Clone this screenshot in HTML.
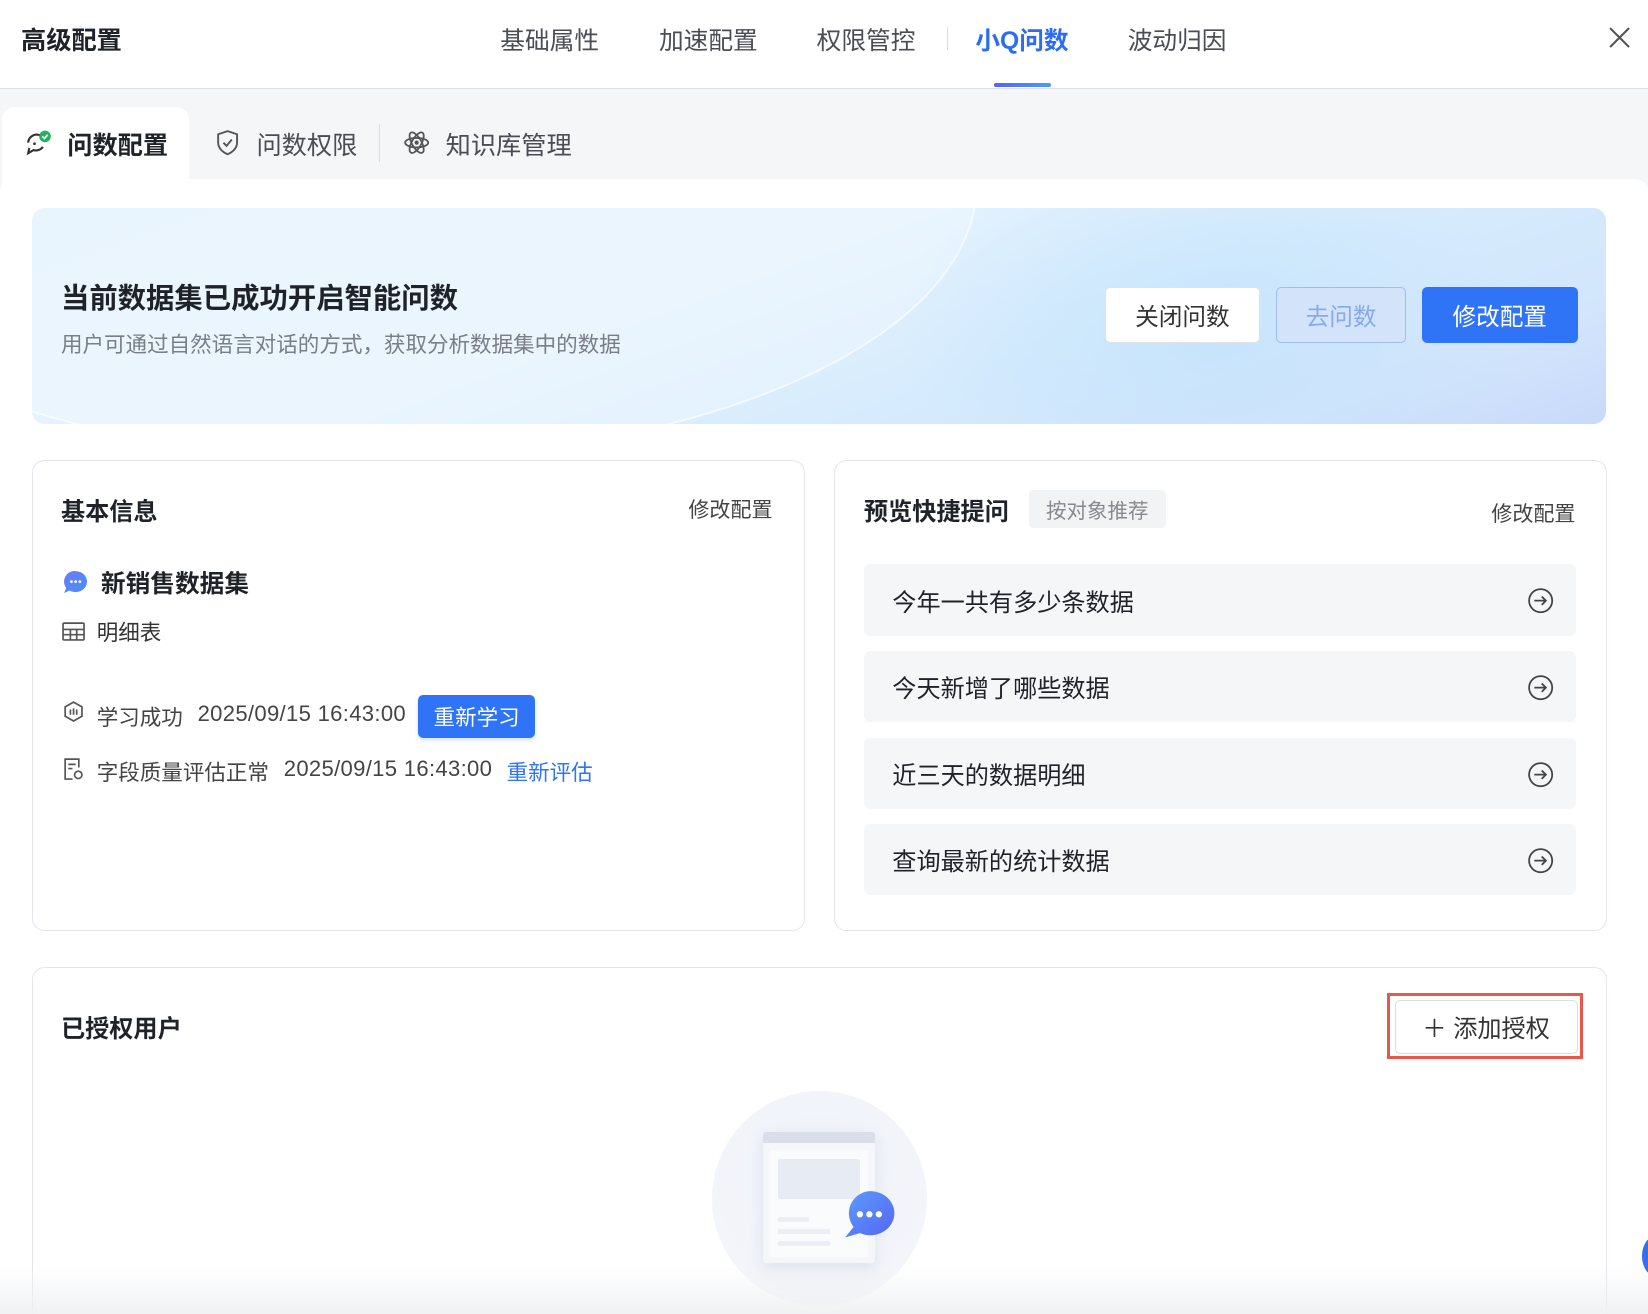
<!DOCTYPE html>
<html><head><meta charset="utf-8"><style>
html{zoom:1.051;overflow:hidden;height:1250px}
*{box-sizing:border-box;margin:0;padding:0}
body{width:1568px;height:1250px;overflow:hidden;background:#fff;font-family:"Liberation Sans","Noto Sans CJK SC",sans-serif;color:#1f2329;position:relative}
.a{position:absolute}
.hdr{left:0;top:0;width:1568px;height:85px;border-bottom:1px solid #e2e3e6;background:#fff}
.t{font-size:23.5px;color:#4a4d55;white-space:nowrap}
.gray{left:0;top:85px;width:1568px;height:1165px;background:#f5f6f8}
.btn{border-radius:5px;font-size:22.5px;display:flex;align-items:center;justify-content:center}
.card{border:1px solid #e3e5ea;border-radius:12px;background:#fff}
.item{left:822px;width:678px;height:68px;background:#f5f6f8;border-radius:6px;font-size:23px;color:#1f2329;padding-left:27px;display:flex;align-items:center}
.item svg{position:absolute;right:21px;top:22px}
.d{font-size:21px;letter-spacing:.3px}
</style></head><body>
<div class="a hdr"></div>
<div class="a" style="left:20px;top:20px;font-size:24px;font-weight:bold;color:#1f2329">高级配置</div>
<div class="a t" style="left:476px;top:20px">基础属性</div>
<div class="a t" style="left:627px;top:20px">加速配置</div>
<div class="a t" style="left:777px;top:20px">权限管控</div>
<div class="a" style="left:901px;top:26px;width:1px;height:22px;background:#dcdde0"></div>
<div class="a t" style="left:928px;top:20px;color:#2b6cf5;font-weight:bold">小Q问数</div>
<div class="a t" style="left:1073px;top:20px">波动归因</div>
<div class="a" style="left:946px;top:79px;width:54px;height:4px;border-radius:2px;background:linear-gradient(90deg,#5b62f5,#4a9bf7)"></div>
<svg class="a" style="left:1530px;top:25px" width="22" height="22" viewBox="0 0 22 22"><path d="M2 2L20 20M20 2L2 20" stroke="#555" stroke-width="2"/></svg>

<div class="a gray"></div>
<div class="a" style="left:2px;top:102px;width:178px;height:80px;background:#fff;border-radius:12px 12px 0 0"></div>
<div class="a" style="left:0;top:170px;width:1568px;height:1080px;background:#fff;border-radius:12px 12px 0 0"></div>
<svg class="a" style="left:23px;top:122px" width="28" height="28" viewBox="0 0 28 28"><path d="M4 14a8 8 0 0 1 14-5M5 19l-1 5 5-3a8 8 0 0 0 9-3" fill="none" stroke="#333" stroke-width="2"/><circle cx="10" cy="15" r="1.3" fill="#333"/><circle cx="20" cy="8" r="5.5" fill="#21b25a"/><path d="M17.5 8l2 2 3-3.5" stroke="#fff" stroke-width="1.6" fill="none"/></svg>
<div class="a" style="left:64px;top:120px;font-size:24px;font-weight:bold">问数配置</div>
<svg class="a" style="left:205px;top:123px" width="24" height="26" viewBox="0 0 24 26"><path d="M12 2l9 3v8c0 5-4 9-9 11-5-2-9-6-9-11V5z" fill="none" stroke="#555" stroke-width="1.8"/><path d="M8 13l3 3 5-6" fill="none" stroke="#555" stroke-width="1.8"/></svg>
<div class="a t" style="left:244px;top:120px;font-size:24px">问数权限</div>
<div class="a" style="left:361px;top:118px;width:1px;height:36px;background:#dcdde0"></div>
<svg class="a" style="left:383px;top:123px" width="26" height="26" viewBox="0 0 26 26"><g fill="none" stroke="#555" stroke-width="1.7"><ellipse cx="13" cy="13" rx="11" ry="4.5"/><ellipse cx="13" cy="13" rx="11" ry="4.5" transform="rotate(60 13 13)"/><ellipse cx="13" cy="13" rx="11" ry="4.5" transform="rotate(-60 13 13)"/></g><circle cx="13" cy="13" r="2" fill="#555"/></svg>
<div class="a t" style="left:424px;top:120px;font-size:24px">知识库管理</div>

<div class="a" style="left:30px;top:198px;width:1498px;height:205px;border-radius:12px;overflow:hidden;background:linear-gradient(160deg,#e4f2fd 0%,#e6f3fe 40%,#d6ebfd 65%,#d2e5fc 85%,#c9d9fa 100%)">
 <div class="a" style="left:-250px;top:-280px;width:1150px;height:520px;border-radius:50%;border:2px solid rgba(255,255,255,.6);background:rgba(240,248,255,.45)"></div>
 <div class="a" style="left:820px;top:-80px;width:600px;height:400px;border-radius:50%;background:radial-gradient(rgba(190,225,252,.6),rgba(190,225,252,0) 70%)"></div>
</div>
<div class="a" style="left:58px;top:263px;font-size:27px;font-weight:bold;color:#1f2329">当前数据集已成功开启智能问数</div>
<div class="a" style="left:58px;top:312px;font-size:20.5px;color:#7a7e86">用户可通过自然语言对话的方式，获取分析数据集中的数据</div>
<div class="a btn" style="left:1051px;top:273px;width:148px;height:53px;background:#fff;border:1px solid #e0e2e6;color:#333">关闭问数</div>
<div class="a btn" style="left:1214px;top:273px;width:124px;height:53px;background:#d3e3fa;border:1px solid #9ebef3;color:#86aaf0">去问数</div>
<div class="a btn" style="left:1353px;top:273px;width:148px;height:53px;background:#2f74f6;color:#fff">修改配置</div>

<div class="a card" style="left:30px;top:438px;width:736px;height:448px"></div>
<div class="a" style="left:58px;top:468px;font-size:23px;font-weight:bold">基本信息</div>
<div class="a" style="left:655px;top:470px;font-size:20px;color:#444">修改配置</div>
<svg class="a" style="left:59px;top:541px" width="26" height="26" viewBox="0 0 26 26"><defs><linearGradient id="g1" x1="0" y1="0" x2="1" y2="1"><stop offset="0" stop-color="#6a7cf7"/><stop offset="1" stop-color="#4a8ef6"/></linearGradient></defs><path d="M13 2a11 10 0 1 1-6 18.5L2 23l2-5A10 10 0 0 1 13 2z" fill="url(#g1)"/><circle cx="9" cy="12" r="1.3" fill="#fff"/><circle cx="13" cy="12" r="1.3" fill="#fff"/><circle cx="17" cy="12" r="1.3" fill="#fff"/></svg>
<div class="a" style="left:96px;top:537px;font-size:23.5px;font-weight:bold">新销售数据集</div>
<svg class="a" style="left:59px;top:591px" width="22" height="20" viewBox="0 0 22 20"><g fill="none" stroke="#555" stroke-width="1.6"><rect x="1" y="2" width="20" height="16" rx="1"/><path d="M1 8h20M1 13h20M8 8v10M14 8v10"/></g></svg>
<div class="a" style="left:92px;top:586px;font-size:20.5px;color:#333">明细表</div>
<svg class="a" style="left:59px;top:666px" width="22" height="24" viewBox="0 0 22 24"><g fill="none" stroke="#555" stroke-width="1.6"><path d="M11 2l8 4.5v9L11 20l-8-4.5v-9z"/><path d="M8 9v5M11 8v6M14 9v5"/></g></svg>
<div class="a" style="left:92px;top:667px;font-size:20.5px;color:#444;white-space:nowrap">学习成功</div>
<div class="a d" style="left:188px;top:667px;color:#444;white-space:nowrap">2025/09/15 16:43:00</div>
<div class="a btn" style="left:398px;top:661px;width:111px;height:41px;background:#2f74f6;color:#fff;font-size:20.5px;box-shadow:0 2px 4px rgba(47,116,246,.2)">重新学习</div>
<svg class="a" style="left:59px;top:720px" width="22" height="24" viewBox="0 0 22 24"><g fill="none" stroke="#555" stroke-width="1.6"><path d="M10 21H3V2h13v8"/><path d="M6 7h7M6 11h4"/><circle cx="15.5" cy="17" r="3.5"/></g></svg>
<div class="a" style="left:92px;top:719px;font-size:20.5px;color:#444;white-space:nowrap">字段质量评估正常</div>
<div class="a d" style="left:270px;top:719px;color:#444;white-space:nowrap">2025/09/15 16:43:00</div>
<div class="a" style="left:482px;top:719px;font-size:20.5px;color:#2f74f6">重新评估</div>

<div class="a card" style="left:794px;top:438px;width:735px;height:448px"></div>
<div class="a" style="left:822px;top:468px;font-size:23px;font-weight:bold">预览快捷提问</div>
<div class="a" style="left:979px;top:466px;width:130px;height:36px;background:#f2f3f5;border-radius:4px;font-size:19.5px;color:#86898f;display:flex;align-items:center;justify-content:center">按对象推荐</div>
<div class="a" style="left:1419px;top:474px;font-size:20px;color:#444">修改配置</div>
<div class="a item" style="top:537px">今年一共有多少条数据<svg width="26" height="26" viewBox="0 0 26 26"><g fill="none" stroke="#444" stroke-width="1.7"><circle cx="13" cy="13" r="11"/><path d="M7 13h11M14 9l4 4-4 4"/></g></svg></div>
<div class="a item" style="top:619px">今天新增了哪些数据<svg width="26" height="26" viewBox="0 0 26 26"><g fill="none" stroke="#444" stroke-width="1.7"><circle cx="13" cy="13" r="11"/><path d="M7 13h11M14 9l4 4-4 4"/></g></svg></div>
<div class="a item" style="top:702px">近三天的数据明细<svg width="26" height="26" viewBox="0 0 26 26"><g fill="none" stroke="#444" stroke-width="1.7"><circle cx="13" cy="13" r="11"/><path d="M7 13h11M14 9l4 4-4 4"/></g></svg></div>
<div class="a item" style="top:784px">查询最新的统计数据<svg width="26" height="26" viewBox="0 0 26 26"><g fill="none" stroke="#444" stroke-width="1.7"><circle cx="13" cy="13" r="11"/><path d="M7 13h11M14 9l4 4-4 4"/></g></svg></div>

<div class="a card" style="left:30px;top:920px;width:1499px;height:345px"></div>
<div class="a" style="left:58px;top:960px;font-size:23px;font-weight:bold">已授权用户</div>
<div class="a" style="left:1320px;top:945px;width:186px;height:63px;border:3px solid #e8574a"></div>
<div class="a btn" style="left:1327px;top:951px;width:174px;height:52px;border:1px solid #dcdde0;background:#fff;color:#333;font-size:23px">＋ 添加授权</div>

<div class="a" style="left:677px;top:1038px;width:205px;height:205px;border-radius:50%;background:radial-gradient(circle at 50% 40%,#eef2f9,#f3f5fa 70%,#fafbfd)"></div>
<div class="a" style="left:726px;top:1077px;width:107px;height:125px;background:#f4f6fa;border-radius:3px;box-shadow:0 6px 14px rgba(180,190,210,.3)"></div>
<div class="a" style="left:726px;top:1077px;width:107px;height:11px;background:#d9dee8;border-radius:3px 3px 0 0"></div>
<div class="a" style="left:733px;top:1094px;width:93px;height:102px;background:#fafbfd"></div>
<div class="a" style="left:740px;top:1103px;width:78px;height:38px;background:#e7ebf3;border-radius:2px"></div>
<div class="a" style="left:740px;top:1158px;width:30px;height:5px;background:#ebeef4"></div>
<div class="a" style="left:740px;top:1169px;width:50px;height:5px;background:#ebeef4"></div>
<div class="a" style="left:740px;top:1181px;width:50px;height:5px;background:#ebeef4"></div>
<svg class="a" style="left:800px;top:1130px" width="54" height="52" viewBox="0 0 54 52"><defs><linearGradient id="g2" x1="0" y1="0" x2="1" y2="1"><stop offset="0" stop-color="#5c9bfb"/><stop offset="1" stop-color="#5567f4"/></linearGradient></defs><path d="M28 3a23 21 0 1 1-10 40L4 47l8-10A21 21 0 0 1 28 3z" fill="url(#g2)"/><circle cx="18" cy="25" r="3" fill="#fff"/><circle cx="27" cy="25" r="3" fill="#fff"/><circle cx="36" cy="25" r="3" fill="#fff"/></svg>
<div class="a" style="left:0;top:1205px;width:1568px;height:45px;background:linear-gradient(180deg,rgba(255,255,255,0),rgba(240,241,243,.95))"></div>
<div class="a" style="left:1562px;top:1175px;width:30px;height:40px;border-radius:50%;background:#3a6de8"></div>
</body></html>
